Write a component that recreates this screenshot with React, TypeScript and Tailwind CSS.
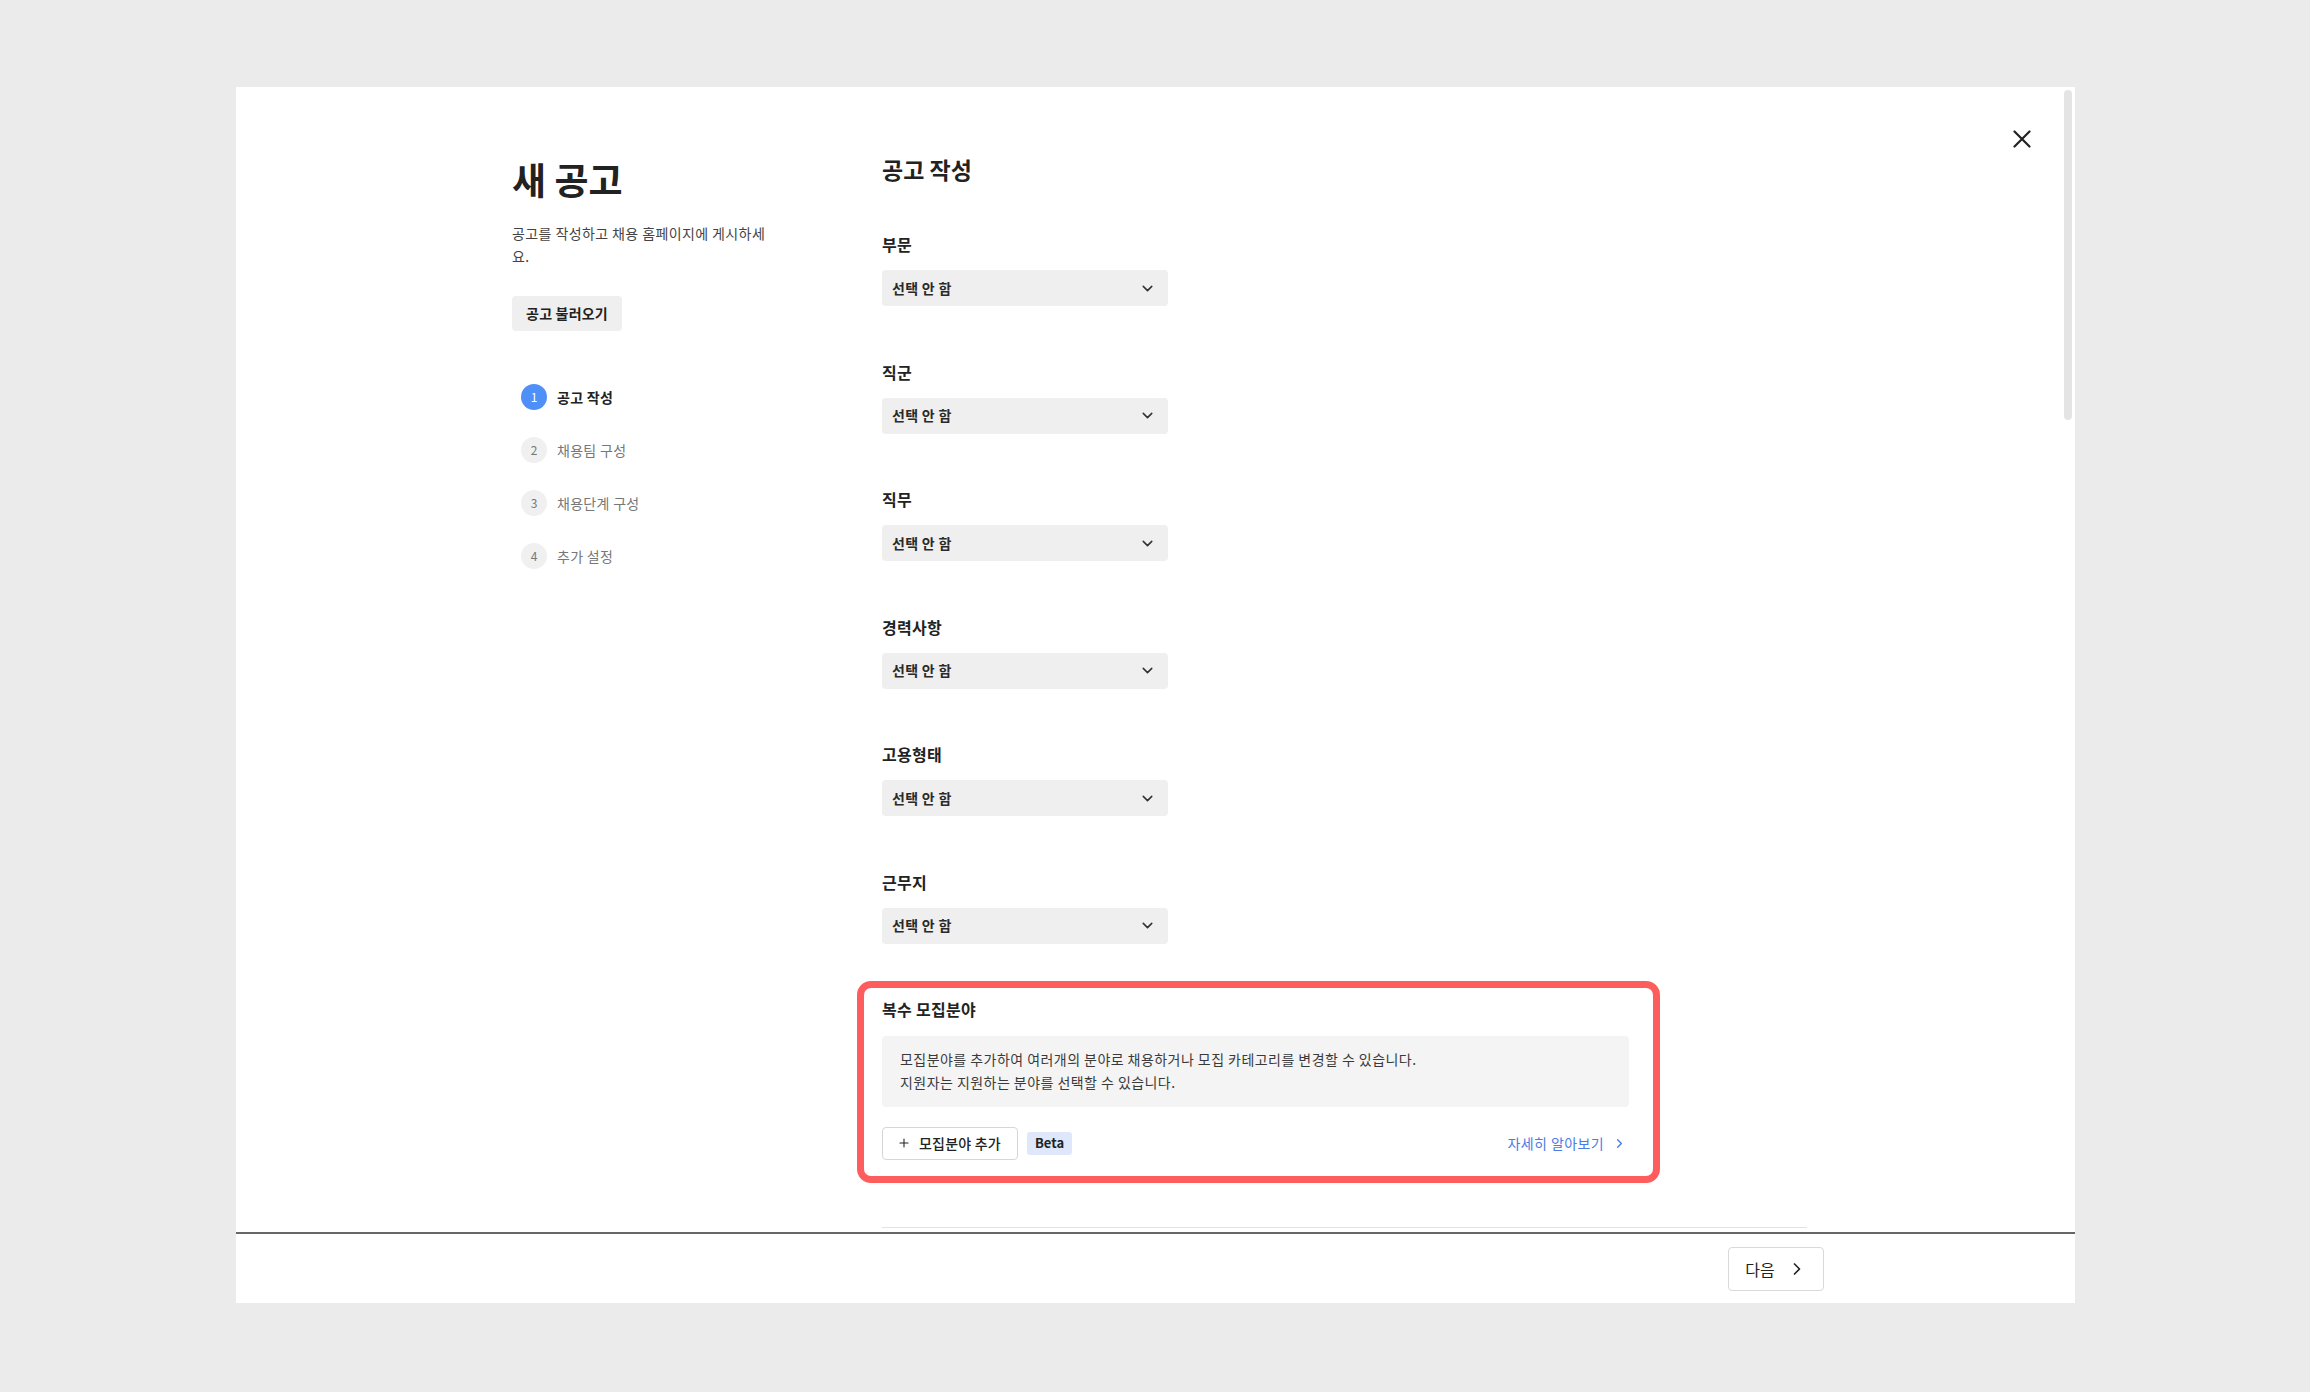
import React from 'react';
import { ChevronDown, ChevronRight, Plus } from 'lucide-react';

const fields = ['부문', '직군', '직무', '경력사항', '고용형태', '근무지'];

const steps = [
  { n: 1, label: '공고 작성', active: true },
  { n: 2, label: '채용팀 구성', active: false },
  { n: 3, label: '채용단계 구성', active: false },
  { n: 4, label: '추가 설정', active: false },
];

const SelectBox: React.FC = () => (
  <div className="w-[286px] h-[36px] rounded-[4px] bg-[#efefef] flex items-center justify-between pl-[10px] pr-[12px]">
    <span className="text-[14px] tracking-[0.3px] font-semibold text-[#2a2a2a]">선택 안 함</span>
    <ChevronDown size={17} strokeWidth={2.2} className="text-[#333]" />
  </div>
);

const App: React.FC = () => {
  return (
    <div className="w-[2310px] h-[1392px] bg-[#ebebeb] pt-[87px] pl-[236px] font-['Noto_Sans_CJK_KR','Noto_Sans',sans-serif] text-[#222]">
      <div className="relative w-[1839px] h-[1216px] bg-white flex flex-col">
        {/* close */}
        <button className="absolute right-[44px] top-[43px] w-[18px] h-[18px]">
          <svg width="18" height="18" viewBox="0 0 18 18" fill="none" stroke="#222" strokeWidth="2.2" strokeLinecap="round">
            <path d="M1.5 1.5 16.5 16.5M16.5 1.5 1.5 16.5" />
          </svg>
        </button>
        {/* scrollbar */}
        <div className="absolute right-[3px] top-[3px] w-[8px] h-[330px] rounded-full bg-[#e4e4e4]" />

        <div className="h-[1145px] overflow-hidden flex pl-[276px]">
          {/* left column */}
          <div className="w-[370px] shrink-0 pt-[70px]">
            <div className="w-[264px]">
              <h1 className="text-[37px] leading-[44px] font-semibold text-[#222]">새 공고</h1>
              <p className="mt-[21px] text-[14px] leading-[23px] tracking-[0.4px] text-[#444]">
                공고를 작성하고 채용 홈페이지에 게시하세요.
              </p>
              <button className="mt-[28px] h-[35px] w-[110px] rounded-[4px] bg-[#efefef] text-[14px] tracking-[0.2px] font-semibold text-[#222]">
                공고 불러오기
              </button>
              <div className="mt-[53px] pl-[9px] flex flex-col gap-[27px]">
                {steps.map((s) => (
                  <div key={s.n} className="flex items-center gap-[10px] h-[26px]">
                    <div
                      className={`w-[26px] h-[26px] rounded-full flex items-center justify-center text-[12px] ${
                        s.active ? 'bg-[#4e8ff8] text-white' : 'bg-[#f0f0f0] text-[#777]'
                      }`}
                    >
                      {s.n}
                    </div>
                    <span className={`text-[14px] tracking-[0.3px] ${s.active ? 'font-bold text-[#222]' : 'text-[#777]'}`}>
                      {s.label}
                    </span>
                  </div>
                ))}
              </div>
            </div>
          </div>

          {/* right column */}
          <div className="w-[925px] shrink-0 pt-[67px]">
            <h2 className="text-[23px] leading-[30px] font-bold text-[#222]">공고 작성</h2>
            <div className="mt-[49px] flex flex-col gap-[54.5px]">
              {fields.map((f) => (
                <div key={f}>
                  <div className="text-[16px] leading-[22px] tracking-[0.3px] font-semibold text-[#222] mb-[15px]">{f}</div>
                  <SelectBox />
                </div>
              ))}
            </div>

            {/* multiple recruit fields (highlighted) */}
            <div className="mt-[37px] ml-[-25px] w-[803px] border-[7px] border-[#fe5d5d] rounded-[14px] pl-[18px] pr-[24px] pt-[10px] pb-[16px]">
              <div className="text-[16px] leading-[22px] tracking-[0.3px] font-semibold text-[#222]">복수 모집분야</div>
              <div className="mt-[16px] rounded-[4px] bg-[#f4f4f4] px-[18px] py-[12.5px] text-[14px] leading-[23px] tracking-[0.45px] text-[#3a3a3a]">
                <div>모집분야를 추가하여 여러개의 분야로 채용하거나 모집 카테고리를 변경할 수 있습니다.</div>
                <div>지원자는 지원하는 분야를 선택할 수 있습니다.</div>
              </div>
              <div className="mt-[20px] flex items-center justify-between">
                <div className="flex items-center gap-[9px]">
                  <button className="h-[33px] w-[136px] rounded-[4px] border border-[#d6d6d6] bg-white flex items-center pl-[14px] gap-[8px] text-[14px] tracking-[0.2px] font-medium text-[#222]">
                    <Plus size={14} strokeWidth={1.8} className="text-[#222]" />
                    모집분야 추가
                  </button>
                  <span className="h-[23px] px-[8px] rounded-[3px] bg-[#dfe7fb] flex items-center text-[13px] font-bold text-[#222]">
                    Beta
                  </span>
                </div>
                <a className="flex items-center gap-[8px] pr-[2px] text-[14px] tracking-[0.4px] text-[#4b7be5]">
                  자세히 알아보기
                  <ChevronRight size={15} strokeWidth={2.2} />
                </a>
              </div>
            </div>

            <div className="mt-[44px] h-px w-[925px] bg-[#e3e3e3]" />
          </div>
        </div>

        {/* footer */}
        <div className="flex-1 border-t-2 border-[#666] flex items-center justify-end pr-[251px]">
          <button className="h-[44px] w-[96px] rounded-[4px] border border-[#d9d9d9] bg-white flex items-center justify-center gap-[12px] text-[16px] text-[#222]">
            다음
            <ChevronRight size={20} strokeWidth={2} className="text-[#222]" />
          </button>
        </div>
      </div>
    </div>
  );
};

export default App;
